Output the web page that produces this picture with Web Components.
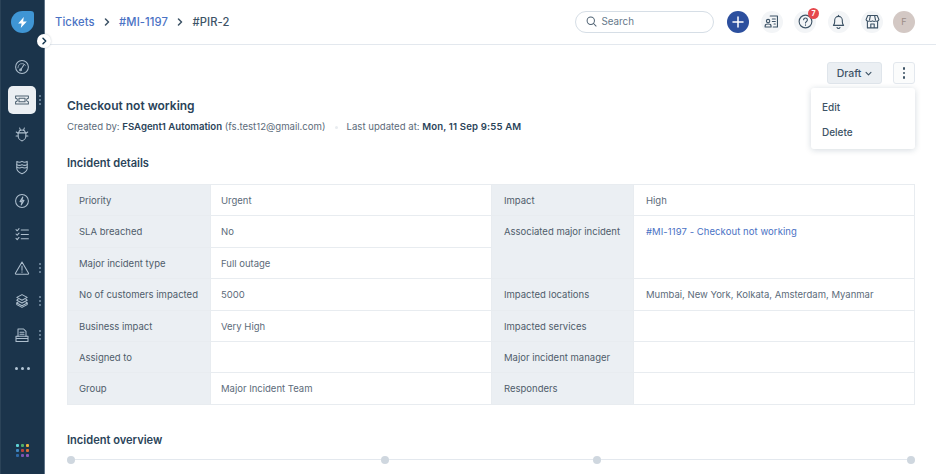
<!DOCTYPE html>
<html>
<head>
<meta charset="utf-8">
<title>PIR-2</title>
<style>
  html, body { margin: 0; height: 100%; background: #fff; overflow: hidden; }
  body { font-family: Inter, "Liberation Sans", sans-serif; color: #12344d; }
</style>
</head>
<body>
<app-shell>
  <side-rail slot="rail"></side-rail>
  <top-bar slot="top"></top-bar>
  <ticket-head></ticket-head>
  <section-title style="margin-top:21px">Incident details</section-title>
  <detail-grid></detail-grid>
  <section-title style="margin-top:27px">Incident overview</section-title>
  <overview-line></overview-line>
</app-shell>

<script>
const ICONS = {
  gauge: '<circle cx="10" cy="10" r="8"/><path d="M4.800 11a5.300 5.300 0 0 1 9.500-3.300" stroke-width=".9"/><path d="M8.400 13.400 12.600 6.800"/><circle cx="8.200" cy="13.600" r="1.100"/>',
  ticket: '<path d="M2 5h16v2.800a2.200 2.200 0 0 0 0 4.400V15H2v-2.800a2.200 2.200 0 0 0 0-4.400z"/><rect x="6.200" y="7.800" width="7.600" height="4.400"/>',
  bug: '<path d="M6.200 7.600C6.200 6 8 5 10 5s3.800 1 3.800 2.600l1 .9v4.600C14.800 15.600 12 18 10 18.600 8 18 5.200 15.600 5.200 13.100V8.500z"/><path d="M7 2.400 8 5M13 2.400 12 5M5.200 9 2.800 7.500M14.800 9l2.400-1.500M5.200 12.500H2.600M14.800 12.500h2.600M6.200 8.600h7.600"/>',
  shield: '<path d="M3.500 3c2 1.200 4.500 1.200 6.500 0 2 1.200 4.500 1.200 6.500 0v9c0 3-3.500 5.200-6.500 6.500-3-1.300-6.500-3.500-6.500-6.500z"/><path d="M3.500 7c2 1.200 4.500 1.200 6.500 0 2 1.200 4.500 1.200 6.500 0M3.500 10.200c2 1.200 4.500 1.200 6.500 0 2 1.200 4.500 1.200 6.500 0"/>',
  bolt: '<circle cx="10" cy="10" r="8"/><path d="M11 5 7.500 10.800h2.700L9 15l3.500-5.800H9.800z"/>',
  list: '<path d="M2.500 4.500 4 6l2.300-2.700M2.500 10 4 11.500l2.300-2.700M2.500 15.500 4 17l2.300-2.700M9 5h9M9 10.500h9M9 16h9"/>',
  warn: '<path d="M10 2.500 18.200 16.500a.8.8 0 0 1-.7 1.200H2.500a.8.8 0 0 1-.7-1.200z"/><path d="M10 7.500v5.200M10 14.600v.8"/>',
  layers: '<path d="M10 2 16.500 5.500 10 9 3.500 5.500z"/><path d="M5 7.800 3.500 9 10 12.500 16.500 9 15 7.800"/><path d="M5 11.300 3.500 12.500 10 16 16.500 12.500 15 11.300"/><path d="M3.500 12.500v2L10 18l6.500-3.500v-2"/>',
  desk: '<path d="M5 12V2.500h7l3 3V12"/><path d="M7.500 6.500h5M7.500 9h5"/><path d="M2.500 11.500h15V18h-15zM2.500 14.500h15"/>',
  contact: '<path d="M8.500 3.500h8.500v13H12M11 7h3.500M11 10h3.500M13 13h1.500"/><circle cx="6" cy="9.500" r="2"/><path d="M2.500 16.500v-1.300c0-1.300 1.300-2.200 3.500-2.200s3.500.9 3.500 2.200v1.300z"/>',
  help: '<circle cx="10" cy="10" r="7.500"/><path d="M7.800 8a2.200 2.200 0 1 1 3.400 1.900c-.8.500-1.200 1-1.200 1.900M10 14v.4"/>',
  bell: '<path d="M4 14.500c1.100-1.200 1.500-2.300 1.500-4.200V8.500a4.500 4.500 0 0 1 9 0v1.800c0 1.900.4 3 1.500 4.200z"/><path d="M8.300 17a1.800 1.800 0 0 0 3.400 0M10 4V2.600"/>',
  store: '<path d="M4.500 3h11l2 4.500a2.400 2.400 0 0 1-3.800 1.800 3 3 0 0 1-3.700 0 3 3 0 0 1-3.700 0A2.400 2.400 0 0 1 2.500 7.500z"/><path d="M4 10v7.500h12V10M8 17.500V13h4v4.500M7.500 3l-1 5M12.500 3l1 5"/>'
};

function iconSvg(name, size, stroke) {
  return `<svg width="${size}" height="${size}" viewBox="0 0 20 20" fill="none" stroke="${stroke}" stroke-width="1.300" stroke-linecap="round" stroke-linejoin="round">${ICONS[name]}</svg>`;
}

class AppShell extends HTMLElement {
  constructor() {
    super();
    this.attachShadow({ mode: 'open' }).innerHTML = `
      <style>
        :host { display: flex; width: 936px; height: 474px; overflow: hidden; }
        .main { flex: 1; min-width: 0; display: flex; flex-direction: column; }
        .body { padding: 17px 21px 0 22px; position: relative; }
      </style>
      <slot name="rail"></slot>
      <div class="main">
        <slot name="top"></slot>
        <div class="body"><slot></slot></div>
      </div>`;
  }
}

class NavItem extends HTMLElement {
  static get observedAttributes() { return ['icon', 'active', 'more']; }
  constructor() {
    super();
    this.attachShadow({ mode: 'open' });
  }
  connectedCallback() { this.render(); }
  attributeChangedCallback() { this.render(); }
  render() {
    const active = this.hasAttribute('active');
    this.shadowRoot.innerHTML = `
      <style>
        :host { display: flex; align-items: center; justify-content: center; height: 33.500px; position: relative; }
        .tile { width: 28px; height: 28px; border-radius: 5px; display: flex; align-items: center; justify-content: center; }
        .tile.on { background: #ebeff3; }
        .more { position: absolute; left: 39px; top: 50%; margin-top: -5px; display: grid; gap: 2px; }
        .more i { width: 2px; height: 2px; background: #7c93a8; border-radius: 50%; display: block; }
      </style>
      <div class="tile ${active ? 'on' : ''}">${iconSvg(this.getAttribute('icon'), 16, active ? '#4c6070' : '#aebfce')}</div>
      ${this.hasAttribute('more') ? '<div class="more"><i></i><i></i><i></i></div>' : ''}`;
  }
}

class SideRail extends HTMLElement {
  constructor() {
    super();
    const colours = ['#5ed3d6', '#4fb069', '#e8b23c', '#3f88c5', '#c0433c', '#d9682f', '#2f6aa8', '#7c55b5', '#8f58b8'];
    this.attachShadow({ mode: 'open' }).innerHTML = `
      <style>
        :host { display: flex; flex-direction: column; flex: none; width: 45px; height: 474px; box-sizing: border-box; background: #1b344b; border-right: 1px solid #5f7488; box-shadow: inset 1px 0 #2b4358; position: relative; z-index: 2; }
        .logo { height: 50px; flex: none; display: flex; justify-content: center; padding-top: 11px; box-sizing: border-box; }
        .logo-mark { width: 23px; height: 22px; background: #3f95d4; border-radius: 50% 14% 50% 50%; display: flex; align-items: center; justify-content: center; }
        nav { display: flex; flex-direction: column; }
        .dots { height: 33.500px; display: flex; align-items: center; justify-content: center; gap: 3px; }
        .dots i { width: 3px; height: 3px; border-radius: 50%; background: #b4c6d6; }
        .apps { margin-top: auto; margin-bottom: 17px; display: grid; grid-template-columns: repeat(3, 3px); gap: 2px; justify-content: center; }
        .apps i { width: 3px; height: 3px; border-radius: 1px; }
        .toggle { position: absolute; left: 37px; top: 34px; width: 14px; height: 14px; border-radius: 50%; background: #fff; box-shadow: 0 0 2px rgba(18,52,77,.25); display: flex; align-items: center; justify-content: center; }
      </style>
      <div class="logo"><div class="logo-mark">
        <svg width="13" height="13" viewBox="0 0 12 12" fill="#fff"><path d="M7.200 1 2 7h3.200L4.400 11 10 5H6.600z"/></svg>
      </div></div>
      <nav>
        <nav-item icon="gauge"></nav-item>
        <nav-item icon="ticket" active more></nav-item>
        <nav-item icon="bug"></nav-item>
        <nav-item icon="shield"></nav-item>
        <nav-item icon="bolt"></nav-item>
        <nav-item icon="list"></nav-item>
        <nav-item icon="warn" more></nav-item>
        <nav-item icon="layers" more></nav-item>
        <nav-item icon="desk" more></nav-item>
        <div class="dots"><i></i><i></i><i></i></div>
      </nav>
      <div class="apps">${colours.map(c => `<i style="background:${c}"></i>`).join('')}</div>
      <div class="toggle"><svg width="8" height="8" viewBox="0 0 8 8" fill="none" stroke="#12344d" stroke-width="1.500" stroke-linecap="round" stroke-linejoin="round"><path d="M3 1.300 5.700 4 3 6.700"/></svg></div>`;
  }
}

class RoundIcon extends HTMLElement {
  constructor() {
    super();
    const badge = this.getAttribute('badge');
    this.attachShadow({ mode: 'open' }).innerHTML = `
      <style>
        :host { display: flex; width: 22px; height: 22px; border-radius: 50%; background: #f3f5f7; align-items: center; justify-content: center; position: relative; flex: none; }
        .badge { position: absolute; left: 14px; top: -3px; width: 11px; height: 11px; border-radius: 50%; background: #e5484d; color: #fff; font: 700 7px/11px Inter, sans-serif; text-align: center; }
      </style>
      ${iconSvg(this.getAttribute('icon'), 17, '#3d5366')}
      ${badge ? `<span class="badge">${badge}</span>` : ''}`;
  }
}

class TopBar extends HTMLElement {
  constructor() {
    super();
    const chev = '<svg class="chev" width="8" height="8" viewBox="0 0 8 8" fill="none" stroke="#3d5366" stroke-width="1.500" stroke-linecap="round" stroke-linejoin="round"><path d="M2.500 1 5.500 4 2.500 7"/></svg>';
    this.attachShadow({ mode: 'open' }).innerHTML = `
      <style>
        :host { display: flex; flex: none; align-items: center; height: 45px; box-sizing: border-box; border-bottom: 1px solid #e3e8ee; padding: 0 21px 1px 10px; font-size: 11.200px; font-weight: 500; }
        .crumbs { display: flex; align-items: center; flex: 1; letter-spacing: .1px; }
        .crumbs a { color: #4a72c4; text-decoration: none; }
        .crumbs b { font-weight: 500; color: #3d5366; }
        .chev { margin: 0 8.500px 0 8px; }
        .search { width: 139px; height: 22px; box-sizing: border-box; border: 1px solid #d6dee6; border-radius: 11px; display: flex; align-items: center; gap: 5px; padding-left: 10px; color: #66788a; font-size: 9.800px; font-weight: 400; margin-right: 13px; }
        .plus { width: 22px; height: 22px; border-radius: 50%; background: #2c4f9e; display: flex; align-items: center; justify-content: center; margin-right: 12px; }
        .tools { display: flex; gap: 11.500px; align-items: center; }
        .who { width: 22px; height: 22px; border-radius: 50%; background: #d3c8c4; color: #9b8d88; font-size: 9px; font-weight: 400; display: flex; align-items: center; justify-content: center; margin-left: 10px; }
      </style>
      <div class="crumbs"><a>Tickets</a>${chev}<a>#MI-1197</a>${chev}<b>#PIR-2</b></div>
      <div class="search">
        <svg width="11" height="11" viewBox="0 0 12 12" fill="none" stroke="#4d6071" stroke-width="1.100" stroke-linecap="round"><circle cx="5.200" cy="5.200" r="4"/><path d="M8.200 8.200 11 11"/></svg>
        Search
      </div>
      <div class="plus"><svg width="12" height="12" viewBox="0 0 12 12" stroke="#fff" stroke-width="1.500" stroke-linecap="round"><path d="M6 1v10M1 6h10"/></svg></div>
      <div class="tools">
        <round-icon icon="contact"></round-icon>
        <round-icon icon="help" badge="7"></round-icon>
        <round-icon icon="bell"></round-icon>
        <round-icon icon="store"></round-icon>
      </div>
      <div class="who">F</div>`;
  }
}

class TicketHead extends HTMLElement {
  constructor() {
    super();
    this.attachShadow({ mode: 'open' }).innerHTML = `
      <style>
        :host { display: block; position: relative; }
        .actions { display: flex; justify-content: flex-end; gap: 11px; height: 22px; }
        .draft { width: 55px; box-sizing: border-box; height: 22px; background: #ebeff3; border: 1px solid #dfe5eb; border-radius: 3px; display: flex; align-items: center; justify-content: center; gap: 4px; font-size: 10.500px; font-weight: 500; color: #3d5366; }
        .kebab { width: 22px; height: 22px; box-sizing: border-box; background: #fbfcfc; border: 1px solid #e3e8ee; border-radius: 3px; display: flex; flex-direction: column; align-items: center; justify-content: center; gap: 2px; }
        .kebab i { width: 2.500px; height: 2.500px; border-radius: 50%; background: #3d5366; }
        .menu { position: absolute; right: 0; top: 26px; width: 104px; height: 61px; background: #fff; border-radius: 3px; box-shadow: 0 1px 6px rgba(18,52,77,.18); padding: 6px 0 4px; box-sizing: border-box; font-size: 10px; font-weight: 500; color: #3d5366; display: flex; flex-direction: column; }
        .menu span { flex: 1; display: flex; align-items: center; padding-left: 11px; }
        h1 { margin: 0; padding-top: 13px; font-size: 12px; line-height: 18px; font-weight: 600; color: #2a4359; }
        .meta { margin-top: 5px; font-size: 9.600px; line-height: 14px; color: #5c6b7a; display: flex; align-items: center; white-space: nowrap; }
        .meta b { font-weight: 600; color: #2a4359; }
        .meta b.date { letter-spacing: .15px; }
        .sep { width: 3px; height: 3px; border-radius: 50%; background: #e8ecf0; margin: 0 8.500px 0 9.500px; }
      </style>
      <div class="actions">
        <div class="draft">Draft <svg width="7" height="7" viewBox="0 0 8 8" fill="none" stroke="#3d5366" stroke-width="1.300" stroke-linecap="round" stroke-linejoin="round"><path d="M1.200 2.800 4 5.500 6.800 2.800"/></svg></div>
        <div class="kebab"><i></i><i></i><i></i></div>
      </div>
      <div class="menu"><span>Edit</span><span>Delete</span></div>
      <h1>Checkout not working</h1>
      <div class="meta"><span>Created by: <b>FSAgent1 Automation</b> (fs.test12@gmail.com)</span><i class="sep"></i><span>Last updated at: <b class="date">Mon, 11 Sep 9:55 AM</b></span></div>`;
  }
}

class SectionTitle extends HTMLElement {
  constructor() {
    super();
    this.attachShadow({ mode: 'open' }).innerHTML = `
      <style>
        :host { display: block; font-size: 11.100px; line-height: 16px; font-weight: 600; color: #2a4359; }
      </style>
      <slot></slot>`;
  }
}

class DetailGrid extends HTMLElement {
  constructor() {
    super();
    const rows = [
      ['Priority', 'Urgent', 'Impact', 'High'],
      ['SLA breached', 'No', 'Associated major incident', '<a>#MI-1197 - Checkout not working</a>'],
      ['Major incident type', 'Full outage'],
      ['No of customers impacted', '5000', 'Impacted locations', 'Mumbai, New York, Kolkata, Amsterdam, Myanmar'],
      ['Business impact', 'Very High', 'Impacted services', ''],
      ['Assigned to', '', 'Major incident manager', ''],
      ['Group', 'Major Incident Team', 'Responders', '']
    ];
    const cells = rows.map((r, i) => {
      const span = i === 1 ? ' style="grid-row: span 2"' : '';
      let html = `<div class="k">${r[0]}</div><div class="v">${r[1]}</div>`;
      if (r.length > 2) html += `<div class="k r"${span}>${r[2]}</div><div class="v r"${span}>${r[3]}</div>`;
      return html;
    }).join('');
    this.attachShadow({ mode: 'open' }).innerHTML = `
      <style>
        :host { display: block; margin-top: 13px; }
        .grid { display: grid; grid-template-columns: 143px 281px 142px 281px; grid-auto-rows: 31.400px; box-sizing: border-box; width: 848px; border-top: 1px solid #e8ecf0; border-left: 1px solid #e8ecf0; font-size: 9.500px; color: #5c6b7a; }
        .k, .v { box-sizing: border-box; padding: 9px 0 0 11px; border-right: 1px solid #e8ecf0; border-bottom: 1px solid #e8ecf0; white-space: nowrap; line-height: 14px; }
        .v { padding-left: 10px; }
        .r, .v.r { padding-left: 12px; }
        .k { background: #ebeff3; color: #4f5d6b; }
        a { color: #4a72c4; letter-spacing: .07px; }
      </style>
      <div class="grid">${cells}</div>`;
  }
}

class OverviewLine extends HTMLElement {
  constructor() {
    super();
    this.attachShadow({ mode: 'open' }).innerHTML = `
      <style>
        :host { display: block; margin-top: 8px; width: 848px; }
        .line { display: flex; align-items: center; height: 8px; }
        .line i { width: 8px; height: 8px; border-radius: 50%; background: #cfd7df; flex: none; }
        .line s { height: 1px; background: #e3e8ee; display: block; }
      </style>
      <div class="line"><i></i><s style="width:306px"></s><i></i><s style="width:204px"></s><i></i><s style="width:306px"></s><i></i></div>`;
  }
}

customElements.define('nav-item', NavItem);
customElements.define('round-icon', RoundIcon);
customElements.define('side-rail', SideRail);
customElements.define('top-bar', TopBar);
customElements.define('ticket-head', TicketHead);
customElements.define('section-title', SectionTitle);
customElements.define('detail-grid', DetailGrid);
customElements.define('overview-line', OverviewLine);
customElements.define('app-shell', AppShell);
</script>
</body>
</html>
